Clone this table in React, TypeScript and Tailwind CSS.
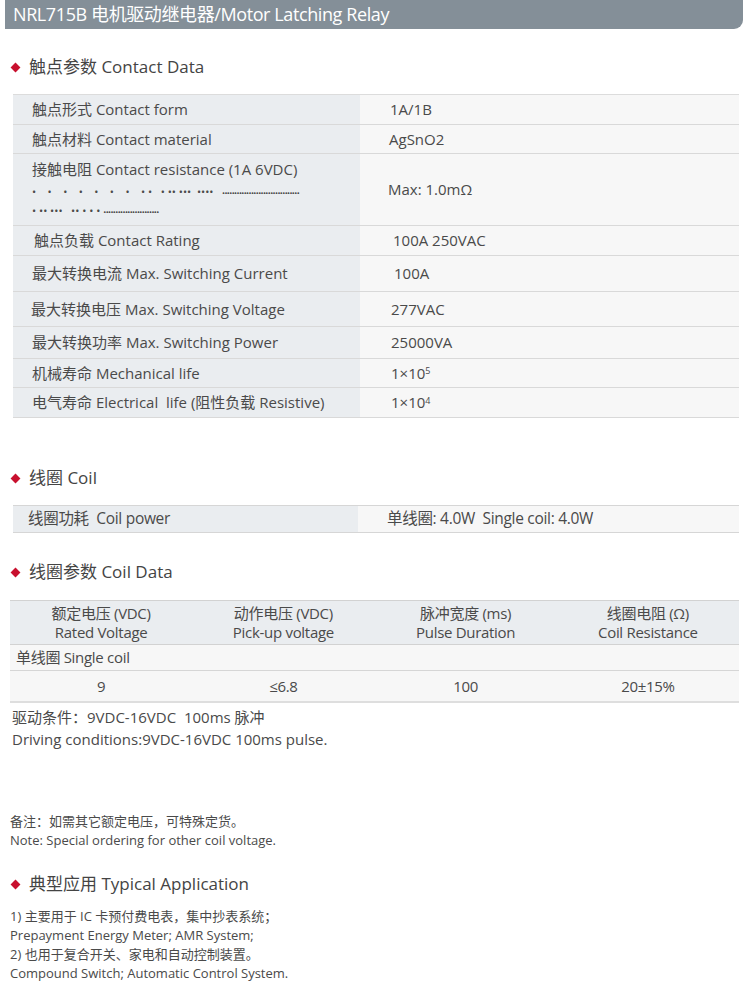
import React from "react";

const font = { fontFamily: '"Open Sans", "Noto Sans CJK SC", sans-serif' };

function Heading({ children, className = "" }: { children: React.ReactNode; className?: string }) {
  return (
    <div className={"flex items-center pl-[12px] text-[17px] text-[#444] " + className}>
      <span className="mr-[10px] inline-block h-[7px] w-[7px] rotate-45 bg-[#c8102e]" />
      <span>{children}</span>
    </div>
  );
}

type Row = { l: React.ReactNode; r: React.ReactNode; h: number; lpad?: number; rpad?: number };

const rows: Row[] = [
  { l: "触点形式 Contact form", r: "1A/1B", h: 30, lpad: 32, rpad: 30 },
  { l: "触点材料 Contact material", r: "AgSnO2", h: 29, lpad: 32, rpad: 29 },
  {
    l: (
      <div className="flex flex-col">
        <span>接触电阻 Contact resistance (1A 6VDC)</span>
        <span className="mt-[2px] whitespace-nowrap text-[11px] leading-[18px]">
          •&nbsp;&nbsp;&nbsp;&nbsp;•&nbsp;&nbsp;&nbsp;&nbsp;•&nbsp;&nbsp;&nbsp;&nbsp;•&nbsp;&nbsp;&nbsp;&nbsp;•&nbsp;&nbsp;&nbsp;&nbsp;•&nbsp;&nbsp;&nbsp;&nbsp;•&nbsp;&nbsp;&nbsp;&nbsp;•&nbsp;•&nbsp;&nbsp;&nbsp;•&nbsp;••&nbsp;•••&nbsp;&nbsp;•••• &nbsp;&nbsp;
          <span className="text-[8px] tracking-[-0.6px]">••••••••••••••••••••••••••••••••</span>
        </span>
        <span className="whitespace-nowrap text-[11px] leading-[18px]">
          •&nbsp;••&nbsp;•••&nbsp;&nbsp;&nbsp;••&nbsp;•&nbsp;•&nbsp;•&nbsp;
          <span className="text-[8px] tracking-[-0.6px]">•••••••••••••••••••••••</span>
        </span>
      </div>
    ),
    r: "Max: 1.0mΩ",
    h: 72,
    lpad: 32,
    rpad: 28,
  },
  { l: "触点负载 Contact Rating", r: "100A 250VAC", h: 30, lpad: 34, rpad: 33 },
  { l: "最大转换电流 Max. Switching Current", r: "100A", h: 36, lpad: 32, rpad: 34 },
  { l: "最大转换电压 Max. Switching Voltage", r: "277VAC", h: 35, lpad: 31, rpad: 31 },
  { l: "最大转换功率 Max. Switching Power", r: "25000VA", h: 32, lpad: 32, rpad: 31 },
  {
    l: "机械寿命 Mechanical life",
    r: (
      <span>
        1×10<sup className="text-[9px]">5</sup>
      </span>
    ),
    h: 29,
    lpad: 32,
    rpad: 31,
  },
  {
    l: "电气寿命 Electrical\u00a0 life (阻性负载 Resistive)",
    r: (
      <span>
        1×10<sup className="text-[9px]">4</sup>
      </span>
    ),
    h: 30,
    lpad: 32,
    rpad: 31,
  },
];

export default function App() {
  return (
    <div className="relative h-[1005px] w-[750px] overflow-hidden bg-white text-[#4a4a4a]" style={font}>
      {/* Title bar */}
      <div className="ml-[5px] flex h-[29px] w-[738px] items-center rounded-br-[9px] bg-[#848f98] pl-[8px] text-[18px] tracking-[-0.4px] text-white">
        NRL715B 电机驱动继电器/Motor Latching Relay
      </div>

      <Heading className="mt-[27px] h-[22px]">触点参数 Contact Data</Heading>

      {/* Contact table */}
      <div className="ml-[13px] mt-[16px] w-[726px] border-t border-[#dcdcdc] text-[15px]">
        {rows.map((row, i) => (
          <div key={i} className="flex border-b border-[#d9d9d9]" style={{ height: row.h }}>
            <div
              className="flex w-[347px] items-center bg-[#eaedf0]"
              style={{ paddingLeft: (row.lpad ?? 32) - 13 }}
            >
              {row.l}
            </div>
            <div className="flex flex-1 items-center bg-[#f7f7f7]" style={{ paddingLeft: row.rpad ?? 30 }}>
              {row.r}
            </div>
          </div>
        ))}
      </div>

      <Heading className="mt-[49px] h-[22px]">线圈 Coil</Heading>

      <div className="ml-[13px] mt-[16px] flex h-[28px] w-[726px] border-t border-b border-[#d6d6d6] text-[15.5px] tracking-[-0.3px]">
        <div className="flex w-[345px] items-center bg-[#eaedf0] pl-[15px]">线圈功耗&nbsp; Coil power</div>
        <div className="flex flex-1 items-center bg-[#f7f7f7] pl-[29px]">单线圈: 4.0W&nbsp; Single coil: 4.0W</div>
      </div>

      <Heading className="mt-[28px] h-[22px]">线圈参数 Coil Data</Heading>

      <div className="ml-[10px] mt-[17px] w-[729px] text-[15px] tracking-[-0.3px]">
        <div className="grid h-[45px] grid-cols-4 border-t border-b border-[#d2d2d2] bg-[#eaedf0] text-center leading-[19px]">
          <div className="flex flex-col justify-center">
            <span>额定电压 (VDC)</span>
            <span>Rated Voltage</span>
          </div>
          <div className="flex flex-col justify-center">
            <span>动作电压 (VDC)</span>
            <span>Pick-up voltage</span>
          </div>
          <div className="flex flex-col justify-center">
            <span>脉冲宽度 (ms)</span>
            <span>Pulse Duration</span>
          </div>
          <div className="flex flex-col justify-center">
            <span>线圈电阻 (Ω)</span>
            <span>Coil Resistance</span>
          </div>
        </div>
        <div className="flex h-[26px] items-center border-b border-[#d6d6d6] bg-[#f7f7f7] pl-[6px]">单线圈 Single coil</div>
        <div className="grid h-[32px] grid-cols-4 items-center border-b-2 border-[#dedede] bg-[#f7f7f7] text-center">
          <div>9</div>
          <div>≤6.8</div>
          <div>100</div>
          <div>20±15%</div>
        </div>
      </div>

      <div className="ml-[12px] mt-[3px] text-[15px] leading-[22px]">
        <div>驱动条件：9VDC-16VDC&nbsp; 100ms 脉冲</div>
        <div>Driving conditions:9VDC-16VDC 100ms pulse.</div>
      </div>

      <div className="ml-[10px] mt-[62px] text-[13px] leading-[19px]">
        <div>备注：如需其它额定电压，可特殊定货。</div>
        <div>Note: Special ordering for other coil voltage.</div>
      </div>

      <Heading className="mt-[23px] h-[22px]">典型应用 Typical Application</Heading>

      <div className="ml-[10px] mt-[12px] text-[13px] leading-[19px]">
        <div>1) 主要用于 IC 卡预付费电表，集中抄表系统；</div>
        <div>Prepayment Energy Meter; AMR System;</div>
        <div>2) 也用于复合开关、家电和自动控制装置。</div>
        <div>Compound Switch; Automatic Control System.</div>
      </div>
    </div>
  );
}
